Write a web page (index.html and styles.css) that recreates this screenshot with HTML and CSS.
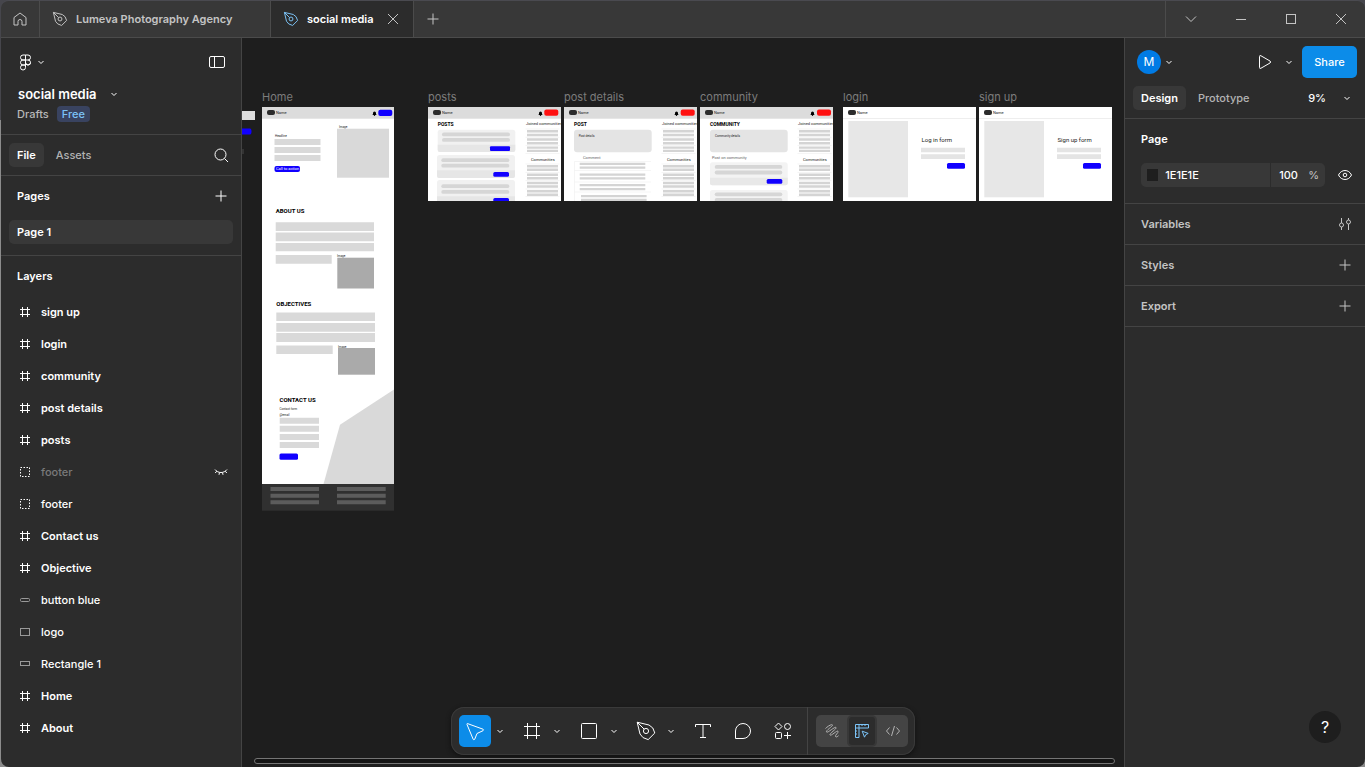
FILE: index.html
```html
<!DOCTYPE html>
<html lang="en">
<head>
  <meta charset="UTF-8" />
  <meta name="viewport" content="width=device-width, initial-scale=1.0" />
  <title>social media</title>
  <link rel="stylesheet" href="styles.css">
</head>
<body>
  <!-- shared icons -->
  <svg class="defs" aria-hidden="true">
    <symbol id="i-chevron" viewBox="0 0 8 8"><path d="M1.5 3 4 5.5 6.5 3"/></symbol>
    <symbol id="i-plus" viewBox="0 0 12 12"><path d="M6 .5v11M.5 6h11"/></symbol>
    <symbol id="i-close" viewBox="0 0 12 12"><path d="m1 1 10 10M11 1 1 11"/></symbol>
    <symbol id="i-pen" viewBox="0 0 24 24"><path d="M3.2 3.2 15 6l3.8 3 2 5-6.6 6.6-5.2-2-3-3.6zM3.2 3.2l6.9 6.9"/><circle cx="12" cy="12" r="2.6"/></symbol>
    <symbol id="i-frame" viewBox="0 0 12 12"><path d="M3.5 1v10M8.5 1v10M1 3.5h10M1 8.5h10"/></symbol>
    <symbol id="i-group" viewBox="0 0 12 12"><rect x="1.5" y="1.5" width="9" height="9" stroke-dasharray="1.5 1.5"/></symbol>

    <!-- pieces used by the wireframes -->
    <symbol id="w-logo" viewBox="0 0 8 5"><rect width="8" height="5" rx="2" fill="#2c2c2c"/></symbol>
    <symbol id="w-bell" viewBox="0 0 5 5"><path d="M1 3.3V2a1.5 1.5 0 0 1 3 0v1.3l.8.8H.2z" fill="#000"/><circle cx="2.5" cy="4.3" r=".7" fill="#000"/></symbol>
    <symbol id="w-side" viewBox="0 0 36 94">
      <path d="M.5 22h34M.5 30.3h34M.5 38.5h34M.5 46.5h34M.5 57h34M.5 65.5h34M.5 73.5h34M.5 82h34M.5 89.5h34" stroke="#eee" stroke-width=".6"/>
      <path fill="#d4d4d4" d="M2 23h31v2.5H2zM2 26.7h31v2.5H2zM2 31.3h31v2.5H2zM2 35h31v2.5H2zM2 39.5h31v2.2H2zM2 42.7h31v2.2H2zM2 58h31v2.5H2zM2 61.5h31V64H2zM2 66.5h31v2.5H2zM2 70h31v2.5H2zM2 74.7h31v2.5H2zM2 78.3h31v2.5H2zM2 83h31v2.5H2zM2 86.5h31V89H2z"/>
    </symbol>
  </svg>

  <div class="window">
    <header class="titlebar">
      <button class="home-tab" aria-label="Home">
        <svg width="14" height="14" viewBox="0 0 14 14"><path d="M1 13V5.500L7 1l6 4.500V13H9V9.500a2 2 0 0 0-4 0V13z"/></svg>
      </button>
      <button class="file-tab first">
        <svg class="pen" width="18" height="18"><use href="#i-pen"/></svg>
        <span>Lumeva Photography Agency</span>
      </button>
      <div class="file-tab active">
        <svg class="pen blue" width="18" height="18"><use href="#i-pen"/></svg>
        <span>social media</span>
        <button class="close-tab" aria-label="Close tab"><svg width="12" height="12"><use href="#i-close"/></svg></button>
      </div>
      <button class="new-tab" aria-label="New tab"><svg width="12" height="12"><use href="#i-plus"/></svg></button>
      <div class="win-controls">
        <button aria-label="Tabs"><svg width="12" height="8" viewBox="0 0 12 8"><path d="m1 1.500 5 5 5-5"/></svg></button>
        <button aria-label="Minimize"><svg width="12" height="12" viewBox="0 0 12 12"><path d="M1 6.500h10"/></svg></button>
        <button aria-label="Maximize"><svg width="12" height="12" viewBox="0 0 12 12"><rect x="1.500" y="1.500" width="9" height="9"/></svg></button>
        <button aria-label="Close"><svg width="12" height="12"><use href="#i-close"/></svg></button>
      </div>
    </header>

    <div class="editor">
      <aside class="panel left">
        <div class="file-head">
          <div class="row menu-row">
            <button class="logo-btn" aria-label="Main menu">
              <svg width="13" height="17" viewBox="0 0 13 17"><path d="M6.500 1H4a2.500 2.500 0 0 0 0 5h5a2.500 2.500 0 0 0 0-5zM6.500 1v12.500M6.500 6H4a2.500 2.500 0 0 0 0 5h2.500M6.500 8.500A2.500 2.500 0 1 0 9 6M6.500 8.500A2.500 2.500 0 0 0 11.500 8.500M6.500 11H4a2.500 2.500 0 1 0 2.500 2.500"/></svg>
              <svg width="8" height="8"><use href="#i-chevron"/></svg>
            </button>
            <button aria-label="Minimize UI">
              <svg width="18" height="14" viewBox="0 0 18 14"><rect x="1.500" y="1.500" width="15" height="11" rx="1.500"/><path d="M6.500 1.500v11"/></svg>
            </button>
          </div>
          <button class="file-name"><span>social media</span><svg width="8" height="8"><use href="#i-chevron"/></svg></button>
          <div class="file-meta"><a href="#">Drafts</a><span class="badge">Free</span></div>
        </div>

        <div class="row panel-tabs">
          <div class="tabs"><button class="tab on">File</button><button class="tab">Assets</button></div>
          <button aria-label="Find"><svg width="16" height="16" viewBox="0 0 16 16"><circle cx="7.500" cy="7.500" r="5.500"/><path d="m11.500 11.500 3.500 3.500"/></svg></button>
        </div>

        <section class="pages">
          <div class="row"><h2>Pages</h2><button aria-label="Add page"><svg width="12" height="12"><use href="#i-plus"/></svg></button></div>
          <button class="page-item">Page 1</button>
        </section>

        <section class="layers">
          <h2>Layers</h2>
          <ul>
            <li><button class="layer frame"><svg><use href="#i-frame"/></svg>sign up</button></li>
            <li><button class="layer frame"><svg><use href="#i-frame"/></svg>login</button></li>
            <li><button class="layer frame"><svg><use href="#i-frame"/></svg>community</button></li>
            <li><button class="layer frame"><svg><use href="#i-frame"/></svg>post details</button></li>
            <li><button class="layer frame"><svg><use href="#i-frame"/></svg>posts</button></li>
            <li>
              <button class="layer hidden-layer"><svg><use href="#i-group"/></svg>footer</button>
              <button aria-label="Show layer"><svg width="14" height="8" viewBox="0 0 14 8"><path d="M1 1.500c3 4 9 4 12 0M2.800 3.200 1.200 5M5.500 4.500 5 6.800M8.500 4.500l.5 2.300M11.200 3.200 12.800 5"/></svg></button>
            </li>
            <li><button class="layer"><svg><use href="#i-group"/></svg>footer</button></li>
            <li><button class="layer frame"><svg><use href="#i-frame"/></svg>Contact us</button></li>
            <li><button class="layer frame"><svg><use href="#i-frame"/></svg>Objective</button></li>
            <li><button class="layer shape"><svg viewBox="0 0 12 12"><rect x="1.500" y="4.500" width="9" height="3" rx="1"/></svg>button blue</button></li>
            <li><button class="layer shape"><svg viewBox="0 0 12 12"><rect x="1.500" y="2.500" width="9" height="7"/></svg>logo</button></li>
            <li><button class="layer shape"><svg viewBox="0 0 12 12"><rect x="1.500" y="3.500" width="9" height="4"/></svg>Rectangle 1</button></li>
            <li><button class="layer frame"><svg><use href="#i-frame"/></svg>Home</button></li>
            <li><button class="layer frame"><svg><use href="#i-frame"/></svg>About</button></li>
          </ul>
        </section>
      </aside>

      <main class="canvas">
        <svg class="offscreen-frame" width="14" height="50" viewBox="0 0 14 50">
          <path d="M0 4h13v9H0z" fill="#ddd"/><path d="M0 21.500h8q1.500 0 1.500 3t-1.500 3H0z" fill="#10f"/><path d="M0 42h2v5H0z" fill="#333"/>
        </svg>

        <figure class="board home">
          <figcaption>Home</figcaption>
          <svg width="132" height="404" viewBox="0 0 132 404">
            <rect width="132" height="377" fill="#fff"/>
            <rect width="132" height="11.700" fill="#dcdcdc"/>
            <use href="#w-logo" x="5" y="3" width="8" height="5"/>
            <text x="14" y="7" font-size="4">Name</text>
            <use href="#w-bell" x="110" y="4" width="5" height="5"/>
            <rect x="116.300" y="2.700" width="14" height="6.300" rx="2" fill="#10f"/>
            <text x="77" y="21" font-size="3">Image</text>
            <rect x="75" y="21.700" width="52" height="49" fill="#d9d9d9"/>
            <text x="13" y="30" font-size="3">Headline</text>
            <path d="M12.500 32h46v6h-46zM12.500 40h46v6h-46zM12.500 48h46v6h-46z" fill="#d9d9d9"/>
            <rect x="12.500" y="59" width="25.500" height="6" rx="2" fill="#10f"/>
            <text class="light" x="14" y="63.300" font-size="4">Call to action</text>
            <text class="title" x="13.700" y="106" font-size="6">ABOUT US</text>
            <path d="M13.700 115.300H112v8.700H13.700zM13.700 125.600H112v8.700H13.700zM13.700 136H112v8.300H13.700zM13.700 148h56v8.700h-56z" fill="#d9d9d9"/>
            <text x="75" y="150" font-size="3">Image</text>
            <rect x="75.300" y="150.700" width="36.700" height="30.800" fill="#aaa"/>
            <text class="title" x="14.300" y="198.500" font-size="6">OBJECTIVES</text>
            <path d="M14.300 205.500H113v8.500H14.300zM14.300 216H113v8.700H14.300zM14.300 226H113v9H14.300zM14.300 238.400h56.400v8.600H14.300z" fill="#d9d9d9"/>
            <text x="76" y="240.500" font-size="3">Image</text>
            <rect x="76" y="241" width="37" height="26.700" fill="#aaa"/>
            <text class="title" x="17.500" y="295" font-size="6">CONTACT US</text>
            <text x="17.500" y="303" font-size="3">Contact form</text>
            <text x="17.500" y="308.500" font-size="3">@email</text>
            <path d="M17.700 310.700H57v6H17.700zM17.700 318.700H57v6H17.700zM17.700 327H57v6H17.700zM17.700 335H57v6H17.700z" fill="#d9d9d9"/>
            <rect x="17.500" y="346.500" width="18.500" height="6.300" rx="1.500" fill="#10f"/>
            <path d="M132 282.500 78 317.700 61.500 377H132z" fill="#d9d9d9"/>
            <rect y="377" width="132" height="26.700" fill="#303030"/>
            <path d="M8.500 380H57v4H8.500zM8.500 386.700H57v4H8.500zM8.500 393.300H57v4H8.500zM75 380h48.700v4H75zM75 386.700h48.700v4H75zM75 393.300h48.700v4H75z" fill="#5c5c5c"/>
          </svg>
        </figure>

        <figure class="board posts">
          <figcaption>posts</figcaption>
          <svg width="133" height="94" viewBox="0 0 133 94">
            <rect width="133" height="94" fill="#fff"/><rect width="133" height="11.700" fill="#dcdcdc"/>
            <use href="#w-logo" x="5" y="3" width="8" height="5"/>
            <text x="14" y="7" font-size="4">Name</text>
            <use href="#w-bell" x="110" y="4" width="5" height="5"/>
            <rect x="116.300" y="2.500" width="14" height="6.200" rx="2" fill="#ff1010"/>
            <text class="title" x="9.700" y="19" font-size="5">POSTS</text>
            <g fill="#f1f1f1"><rect x="9.700" y="22.700" width="77.600" height="22.300" rx="2.500"/><rect x="9" y="48" width="78" height="23" rx="2.500"/><rect x="9" y="73" width="78" height="24" rx="2.500"/></g>
            <path d="M9.700 37.700h77.600V43q0 2-2 2H11.700q-2 0-2-2zM9 63.300h78V69q0 2-2 2H11q-2 0-2-2zM9 89.300h78V94H9z" fill="#e6e6e6"/>
            <g fill="#d6d6d6"><rect x="14" y="25.500" width="68" height="3.800" rx="1.900"/><rect x="14" y="31" width="68" height="3.800" rx="1.900"/><rect x="13.300" y="51.300" width="68" height="3.800" rx="1.900"/><rect x="13.300" y="56.800" width="68" height="3.800" rx="1.900"/><rect x="13.300" y="77.300" width="68" height="3.800" rx="1.900"/><rect x="13.300" y="83" width="68" height="3.800" rx="1.900"/></g>
            <g fill="#10f"><rect x="62" y="39.300" width="20" height="4.700" rx="1"/><rect x="65.300" y="65" width="15.700" height="4.800" rx="1.500"/><rect x="65.300" y="91" width="15.700" height="5" rx="1.500"/></g>
            <text x="98" y="18" font-size="4">Joined communities</text>
            <text x="103" y="54" font-size="4">Communities</text>
            <use href="#w-side" x="97" width="36" height="94"/>
          </svg>
        </figure>

        <figure class="board details">
          <figcaption>post details</figcaption>
          <svg width="133" height="94" viewBox="0 0 133 94">
            <rect width="133" height="94" fill="#fff"/><rect width="133" height="11.700" fill="#dcdcdc"/>
            <use href="#w-logo" x="5" y="3" width="8" height="5"/>
            <text x="14" y="7" font-size="4">Name</text>
            <use href="#w-bell" x="110" y="4" width="5" height="5"/>
            <rect x="116.700" y="2.500" width="14" height="6.200" rx="2" fill="#ff1010"/>
            <text class="title" x="10" y="19" font-size="5">POST</text>
            <rect x="10" y="22.700" width="77.700" height="22.600" rx="3" fill="#e4e4e4"/>
            <text x="14.700" y="30" font-size="3">Post details</text>
            <text class="grey" x="19" y="52" font-size="4">Comment</text>
            <path d="M10.500 54.500h76.500M10.500 63.500h76.500M10.500 75h76.500M10.500 85h76.500M10.500 54.500V94" stroke="#eee" stroke-width=".6"/>
            <path d="M15.700 55.700h65.600v2.300H15.700zM15.700 59.500h65.600v2.300H15.700zM15.700 66.500h65.600v2.300H15.700zM15.700 70.300h65.600v2.300H15.700zM15.700 77h65.600v2.300H15.700zM15.700 81h65.600v2.300H15.700zM17 88h65.600v2.300H17zM17 91.700h65.600V94H17z" fill="#d4d4d4"/>
            <text x="98" y="18" font-size="4">Joined communities</text>
            <text x="103" y="54" font-size="4">Communities</text>
            <use href="#w-side" x="97" width="36" height="94"/>
          </svg>
        </figure>

        <figure class="board community">
          <figcaption>community</figcaption>
          <svg width="133" height="94" viewBox="0 0 133 94">
            <rect width="133" height="94" fill="#fff"/><rect width="133" height="11.700" fill="#dcdcdc"/>
            <use href="#w-logo" x="5" y="3" width="8" height="5"/>
            <text x="14" y="7" font-size="4">Name</text>
            <use href="#w-bell" x="110" y="4" width="5" height="5"/>
            <rect x="117" y="2.500" width="14" height="6.200" rx="2" fill="#ff1010"/>
            <text class="title" x="10" y="19" font-size="5">COMMUNITY</text>
            <rect x="10" y="22.700" width="77.700" height="22.600" rx="3" fill="#e4e4e4"/>
            <text x="15" y="30" font-size="3">Community details</text>
            <text class="grey" x="12" y="52" font-size="4">Post on community</text>
            <rect x="10" y="55.300" width="77.700" height="23" rx="2.500" fill="#f3f3f3"/><rect x="10" y="83" width="77.700" height="14" rx="2.500" fill="#f3f3f3"/>
            <path d="M10 70.700h77.700v5.600q0 2-2 2H12q-2 0-2-2z" fill="#e8e8e8"/>
            <g fill="#d6d6d6"><rect x="14.700" y="58" width="67.600" height="3.800" rx="1.900"/><rect x="14.700" y="63.600" width="67.600" height="3.800" rx="1.900"/><rect x="14.700" y="85.400" width="67.600" height="3.800" rx="1.900"/><rect x="14.700" y="91" width="67.600" height="3.800" rx="1.900"/></g>
            <rect x="66.700" y="72" width="15.600" height="4.800" rx="1.500" fill="#10f"/>
            <text x="98" y="18" font-size="4">Joined communities</text>
            <text x="103" y="54" font-size="4">Communities</text>
            <use href="#w-side" x="97" width="36" height="94"/>
          </svg>
        </figure>

        <figure class="board login">
          <figcaption>login</figcaption>
          <svg width="133" height="94" viewBox="0 0 133 94">
            <rect width="133" height="94" fill="#fff"/><path d="M0 11.500h133" stroke="#eee"/>
            <use href="#w-logo" x="5" y="3" width="8" height="5"/>
            <text x="14" y="7" font-size="4">Name</text>
            <rect x="5.300" y="14" width="59.700" height="76.300" fill="#e7e7e7"/>
            <text x="78.500" y="35" font-size="6">Log in form</text>
            <path d="M78 40.700h44v4.600H78zM78 47.300h44V52H78z" fill="#e4e4e4"/>
            <rect x="104" y="56" width="18" height="5.800" rx="1.500" fill="#10f"/>
          </svg>
        </figure>

        <figure class="board signup">
          <figcaption>sign up</figcaption>
          <svg width="133" height="94" viewBox="0 0 133 94">
            <rect width="133" height="94" fill="#fff"/><path d="M0 11.500h133" stroke="#eee"/>
            <use href="#w-logo" x="5" y="3" width="8" height="5"/>
            <text x="14" y="7" font-size="4">Name</text>
            <rect x="5.300" y="14" width="59.700" height="76.300" fill="#e7e7e7"/>
            <text x="78.500" y="35" font-size="6">Sign up form</text>
            <path d="M78 40.700h44v4.600H78zM78 47.300h44V52H78z" fill="#e4e4e4"/>
            <rect x="104" y="56" width="18" height="5.800" rx="1.500" fill="#10f"/>
          </svg>
        </figure>

        <div class="toolbar">
          <div class="tools">
            <button class="tool on" aria-label="Move"><svg><path d="M4.300 4.500 20 10.200q1.400.7 0 1.500L14 14.500l-2.300 5.800q-.8 1.200-1.500 0L4 5.500q-.2-.8.300-1z"/></svg></button>
            <button class="more" aria-label="Move tools"><svg width="8" height="8"><use href="#i-chevron"/></svg></button>
            <button class="tool" aria-label="Frame"><svg><path d="M7.500 4v16M16.500 4v16M4 7.500h16M4 16.500h16"/></svg></button>
            <button class="more" aria-label="Region tools"><svg width="8" height="8"><use href="#i-chevron"/></svg></button>
            <button class="tool" aria-label="Rectangle"><svg><rect x="4.500" y="4.500" width="15" height="15" rx="1"/></svg></button>
            <button class="more" aria-label="Shape tools"><svg width="8" height="8"><use href="#i-chevron"/></svg></button>
            <button class="tool" aria-label="Pen"><svg><use href="#i-pen"/></svg></button>
            <button class="more" aria-label="Drawing tools"><svg width="8" height="8"><use href="#i-chevron"/></svg></button>
            <button class="tool" aria-label="Text"><svg><path d="M4.500 8V5.500h15V8M12 5.500v13M9 18.500h6"/></svg></button>
            <button class="tool" aria-label="Comment"><svg><path d="M4.500 19.500V12a7.500 7.500 0 1 1 7.500 7.500z"/></svg></button>
            <button class="tool" aria-label="Actions"><svg><path d="m7.500 4 3.500 3.500L7.500 11 4 7.500zM16.500 13v7M13 16.500h7"/><circle cx="16.500" cy="7.500" r="3"/><rect x="4.500" y="13.500" width="6" height="6" rx="1"/></svg></button>
          </div>
          <div class="modes">
            <div class="mode-group">
              <button aria-label="Draw"><svg viewBox="0 0 16 16"><path d="M1.500 5.500C4 3 8 .8 8.500 2S1.500 7.500 2.500 9s8.500-6 9.500-4.500S5 10.500 6 12s7-5 8-3.800-3.500 4.300-2.500 5.300 2 0 3-.8"/></svg></button>
              <button class="on" aria-label="Design"><svg viewBox="0 0 16 16"><path d="M1.500 1.500h13v3.500H5v9.500H1.500zM5 1.500V5M1.500 5H5M8 1.500V3M11 1.500V3M1.500 8H3M1.500 11H3M8.200 8.200l6 2.200-2.500 1.300-1.200 2.500z"/></svg></button>
              <button aria-label="Dev Mode"><svg viewBox="0 0 16 16"><path d="M4.500 4.500 1.500 8l3 3.500M11.500 4.500l3 3.500-3 3.500M9.500 3 6.500 13"/></svg></button>
            </div>
          </div>
        </div>
        <div class="h-scroll"></div>
      </main>

      <aside class="panel right">
        <div class="right-head">
          <div class="row account">
            <button class="user" aria-label="Account"><span class="avatar">M</span><svg width="8" height="8"><use href="#i-chevron"/></svg></button>
            <div class="actions">
              <button aria-label="Present"><svg width="14" height="16" viewBox="0 0 14 16"><path d="M1.500 2.500v11q0 1.500 1.500.7l9-5.200q1.300-1 0-2L3 1.800q-1.500-.8-1.500.7z"/></svg></button>
              <button aria-label="Present options"><svg width="8" height="8"><use href="#i-chevron"/></svg></button>
              <button class="share">Share</button>
            </div>
          </div>
          <div class="row mode-tabs">
            <div class="tabs"><button class="tab on">Design</button><button class="tab">Prototype</button></div>
            <button class="zoom">9%<svg width="8" height="8"><use href="#i-chevron"/></svg></button>
          </div>
        </div>
        <section class="page-fill">
          <h2>Page</h2>
          <div class="row">
            <div class="fill">
              <label class="swatch" for="hex" aria-label="Page color"></label>
              <input class="hex" id="hex" type="text" value="1E1E1E">
              <input class="opacity" id="opacity" type="text" value="100" aria-label="Opacity">
              <label for="opacity">%</label>
            </div>
            <button aria-label="Toggle visibility"><svg width="16" height="12" viewBox="0 0 16 12"><path d="M1.500 6c2.700-6 10.300-6 13 0-2.700 6-10.300 6-13 0z"/><circle cx="8" cy="6" r="1.800"/></svg></button>
          </div>
        </section>
        <section class="row prop"><h2>Variables</h2><button aria-label="Open variables"><svg width="12" height="14" viewBox="0 0 12 14"><path d="M2.500 1v5M2.500 10v3M9.500 1v2M9.500 7v6"/><circle cx="2.500" cy="8" r="2"/><circle cx="9.500" cy="5" r="2"/></svg></button></section>
        <section class="row prop"><h2>Styles</h2><button aria-label="Add style"><svg width="12" height="12"><use href="#i-plus"/></svg></button></section>
        <section class="row prop"><h2>Export</h2><button aria-label="Add export"><svg width="12" height="12"><use href="#i-plus"/></svg></button></section>
        <button class="help" aria-label="Help">?</button>
      </aside>
    </div>
  </div>
</body>
</html>
```
FILE: styles.css
```css
* {
  box-sizing: border-box;
}

body {
  margin: 0;
  background: linear-gradient(#46464c 120px, #8c8c8c 120px);
  color: #fff;
  font-family: Inter, "Liberation Sans", sans-serif;
  font-size: 11px;
  line-height: 16px;
}

button {
  display: flex;
  align-items: center;
  justify-content: center;
  padding: 0;
  border: none;
  background: none;
  color: inherit;
  font: inherit;
}

a {
  color: inherit;
  text-decoration: none;
}

svg {
  display: block;
  flex-shrink: 0;
  fill: none;
  stroke: currentColor;
}

h2 {
  margin: 0;
  font-size: 11px;
  font-weight: 600;
}

ul {
  margin: 0;
  padding: 0;
  list-style: none;
}

.defs {
  position: absolute;
  width: 0;
  height: 0;
}

.row {
  display: flex;
  align-items: center;
  justify-content: space-between;
}

.window {
  display: flex;
  flex-direction: column;
  height: 100vh;
  margin-left: 1px;
  border-top: 1px solid #4a4a50;
  border-radius: 8px;
  overflow: hidden;
}

/* title bar */
.titlebar {
  display: flex;
  height: 37px;
  flex-shrink: 0;
  background: #383838;
  border-bottom: 1px solid #4b4b4b;
  color: #c4c4c4;
}

.home-tab {
  width: 39px;
  border-right: 1px solid #4b4b4b;
}

.file-tab {
  display: flex;
  align-items: center;
  justify-content: flex-start;
  gap: 7px;
  padding: 0 14px 0 11px;
  border-right: 1px solid #4b4b4b;
  font-weight: 600;
}

.file-tab.first {
  width: 231px;
}

.file-tab.active {
  width: 143px;
  background: #2c2c2c;
  color: #fff;
}

.close-tab {
  margin-left: auto;
  color: #c4c4c4;
}

.pen {
  stroke-width: 1.3;
}

.blue {
  color: #7cc4f8;
}

.new-tab {
  width: 38px;
}

.win-controls {
  display: flex;
  width: 200px;
  margin-left: auto;
  border-left: 1px solid #4b4b4b;
}

.win-controls button {
  width: 50px;
  flex-shrink: 0;
}

/* panels */
.editor {
  display: flex;
  flex: 1;
  min-height: 0;
}

.panel {
  width: 241px;
  flex-shrink: 0;
  background: #2c2c2c;
}

.left {
  border-right: 1px solid #444;
}

.file-head {
  height: 97px;
  border-bottom: 1px solid #444;
}

.menu-row {
  height: 48px;
  padding: 0 15px 0 18px;
}

.logo-btn {
  gap: 5px;
}

.file-name {
  gap: 13px;
  padding-left: 17px;
  font-size: 13px;
  font-weight: 600;
}

.file-meta {
  display: flex;
  align-items: center;
  gap: 8px;
  padding: 4px 16px;
  color: #b8b8b8;
  font-weight: 500;
}

.badge {
  padding: 0 5px;
  border-radius: 4px;
  background: #394360;
  color: #7cc4f8;
}

.panel-tabs {
  height: 41px;
  padding: 0 12px 0 8px;
  border-bottom: 1px solid #444;
}

.tabs {
  display: flex;
}

.tab {
  height: 24px;
  padding: 0 8px;
  border-radius: 5px;
  color: #b3b3b3;
  font-weight: 500;
}

.tab + .tab {
  margin-left: 4px;
}

.tab.on {
  background: #383838;
  color: #fff;
  font-weight: 600;
}

.pages {
  padding: 0 8px 11px;
  border-bottom: 1px solid #444;
}

.pages .row {
  height: 40px;
  margin-bottom: 4px;
  padding: 0 6px 0 8px;
}

.page-item {
  width: 100%;
  height: 24px;
  justify-content: flex-start;
  padding: 0 8px;
  border-radius: 5px;
  background: #383838;
  font-weight: 600;
}

.layers h2 {
  padding: 12px 16px;
}

.layers li {
  display: flex;
  align-items: center;
  padding-right: 13px;
}

.layer {
  flex: 1;
  height: 32px;
  justify-content: flex-start;
  gap: 10px;
  padding-left: 18px;
  font-weight: 500;
}

.layer svg {
  width: 12px;
  height: 12px;
}

.layer.frame {
  font-weight: 600;
}

.layer.shape svg {
  color: #999;
}

.hidden-layer {
  color: #7a7a7a;
}

.hidden-layer svg {
  color: #fff;
}

/* canvas */
.canvas {
  position: relative;
  flex: 1;
  min-width: 0;
  overflow: hidden;
  background: #1e1e1e;
}

.board {
  position: absolute;
  top: 51px;
  margin: 0;
}

.board figcaption {
  padding-bottom: 2px;
  color: #7c7c7c;
}

.board svg,
.defs,
.offscreen-frame {
  stroke: none;
  font-family: Roboto, sans-serif;
}

.board text {
  fill: #222;
}

.board .title {
  font-weight: 700;
  fill: #000;
}

.board .grey {
  fill: #666;
}

.board .light {
  fill: #fff;
}

.offscreen-frame {
  position: absolute;
  top: 69px;
  left: 0;
}

.home { left: 20px; }
.posts { left: 186px; }
.details { left: 322px; }
.community { left: 458px; }
.login { left: 601px; }
.signup { left: 737px; }

.toolbar {
  position: absolute;
  right: 0;
  bottom: 12px;
  left: 0;
  display: flex;
  width: fit-content;
  margin: 0 auto;
  border-radius: 13px;
  background: #2c2c2c;
  box-shadow: inset 0 0 0 1px #3a3a3a, 0 2px 5px #111;
}

.tools {
  display: flex;
  gap: 8px;
  padding: 8px;
}

.tool {
  width: 32px;
  height: 32px;
  border-radius: 5px;
}

.tool svg {
  width: 24px;
  height: 24px;
}

.tool.on {
  background: #0c8ce9;
}

.more {
  width: 17px;
  margin-left: -8px;
}

.modes {
  padding: 8px 7px 8px 8px;
  border-left: 1px solid #444;
}

.mode-group {
  display: flex;
  border-radius: 5px;
  background: #444;
  color: #b3b3b3;
}

.mode-group button {
  width: 31px;
  height: 32px;
}

.mode-group svg {
  width: 16px;
  height: 16px;
}

.mode-group .on {
  width: 30px;
  background: #2c2c2c;
  border: 2px solid #383838;
  border-radius: 5px;
  color: #7cc4f8;
}

.h-scroll {
  position: absolute;
  right: 9px;
  bottom: 3px;
  left: 12px;
  height: 6px;
  border: 1px solid #757575;
  border-radius: 3px;
  background: #141414;
}

/* right panel */
.right {
  position: relative;
  border-left: 1px solid #444;
}

.right-head {
  height: 81px;
  border-bottom: 1px solid #444;
}

.account {
  height: 48px;
  padding: 0 8px 0 12px;
}

.user {
  gap: 4px;
}

.avatar {
  width: 24px;
  height: 24px;
  border-radius: 50%;
  background: #007be5;
  font-size: 12px;
  line-height: 24px;
}

.actions {
  display: flex;
  align-items: center;
  gap: 9px;
}

.actions button:first-child {
  margin-right: 4px;
}

.share {
  min-width: 55px;
  height: 32px;
  padding: 0 12px;
  border-radius: 5px;
  background: #0c8ce9;
  font-weight: 500;
}

.mode-tabs {
  padding: 0 14px 0 8px;
}

.zoom {
  gap: 17px;
  font-weight: 500;
}

.page-fill {
  height: 85px;
  padding: 12px 12px 0 16px;
  border-bottom: 1px solid #444;
}

.page-fill h2 {
  margin-bottom: 16px;
}

.fill {
  display: flex;
  align-items: center;
  width: 184px;
  height: 24px;
  padding: 0 6px;
  border-radius: 5px;
  background: #383838;
  color: #c4c4c4;
}

.swatch {
  width: 12px;
  height: 12px;
  background: #1e1e1e;
}

.fill input {
  height: 24px;
  padding: 0 7px;
  border: none;
  background: none;
  color: #fff;
  font: inherit;
  font-weight: 500;
}

.hex {
  width: 112px;
}

.fill .opacity {
  width: 38px;
  padding-left: 8px;
  border-left: 1px solid #2c2c2c;
}

.prop {
  height: 41px;
  padding: 0 14px 0 16px;
  border-bottom: 1px solid #444;
  color: #c4c4c4;
}

.help {
  position: absolute;
  right: 24px;
  bottom: 24px;
  width: 32px;
  height: 32px;
  border-radius: 50%;
  background: #1e1e1e;
  font-size: 16px;
}
```
